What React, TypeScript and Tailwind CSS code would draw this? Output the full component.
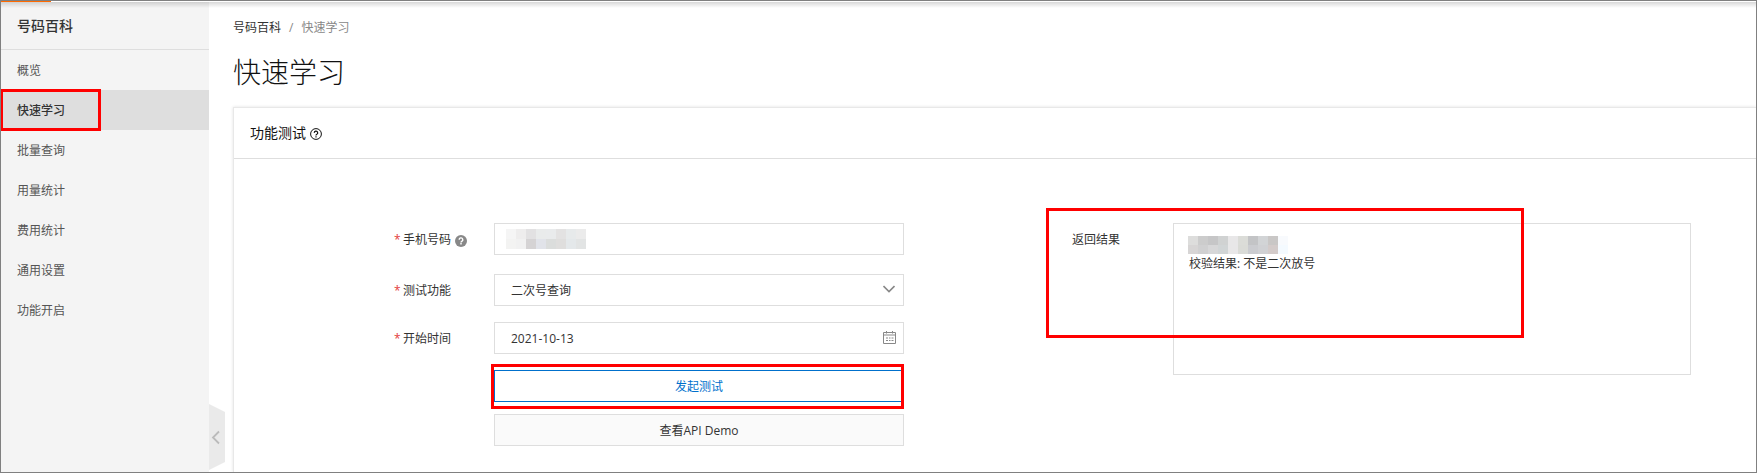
import { type ReactNode } from "react";

const menuItems = [
  "概览",
  "快速学习",
  "批量查询",
  "用量统计",
  "费用统计",
  "通用设置",
  "功能开启",
];

const phoneMosaic = [
  "bg-[#f5f5f5]", "bg-[#eeeded]", "bg-[#e2e1e2]", "bg-[#e9ebeb]",
  "bg-[#e9ebec]", "bg-[#e3e2e2]", "bg-[#e7eaeb]", "bg-[#ebebeb]",
  "bg-[#f3f3f2]", "bg-[#f1f1f1]", "bg-[#d5d3d4]", "bg-[#e1e3e9]",
  "bg-[#dbdddc]", "bg-[#dfdedd]", "bg-[#e4e8ea]", "bg-[#e2e4e4]",
];

const resultMosaic = [
  "bg-[#dddddc]", "bg-[#cccccc]", "bg-[#c6c6c7]", "bg-[#d0d2d2]", "bg-[#e8e7e8]",
  "bg-[#dbdcd8]", "bg-[#c3c4c6]", "bg-[#d2d4d6]", "bg-[#c9c7c6]", "bg-[#f8fafd]",
  "bg-[#d7d5d5]", "bg-[#d0d0d1]", "bg-[#d7d7d8]", "bg-[#d1d5d6]", "bg-[#e8e7e8]",
  "bg-[#dadbd7]", "bg-[#cbccd0]", "bg-[#d0d1d4]", "bg-[#d3cbca]", "bg-[#f4faff]",
];

export default function App() {
  return (
    <div className="relative flex min-h-screen overflow-hidden border border-[#808080] bg-white font-['Open_Sans','Noto_Sans_CJK_SC',sans-serif] text-xs text-[#333]">
      <TopBar />
      <Sidebar />

      <main className="flex min-w-0 flex-1 flex-col pl-6 pt-[17px]">
        <nav aria-label="breadcrumb" className="flex gap-2 leading-5">
          <a href="#">号码百科</a>
          <span className="text-[#888]">/</span>
          <span className="text-[#888]">快速学习</span>
        </nav>
        <h1 className="mt-3.5 text-[28px] font-light leading-10 text-[#111]">
          快速学习
        </h1>

        <section className="mt-[15px] flex-1 border-l border-t border-[#e8e8e8] shadow-[0_0_3px_rgba(0,0,0,0.12)]">
          <header className="flex h-[51px] items-center gap-1 border-b border-[#dedede] pl-4 text-sm text-[#111]">
            <h2>功能测试</h2>
            <HelpOutlineIcon />
          </header>
          <div className="grid grid-cols-[510fr_619fr] items-start gap-x-[168px] pb-6 pl-40 pr-[65px] pt-16">
            <TestForm />
            <ResultPanel />
          </div>
        </section>
      </main>
    </div>
  );
}

function TopBar() {
  return (
    <div className="absolute inset-x-0 top-0 z-10">
      <div className="h-px bg-white">
        <div className="h-px w-[50px] bg-[#ff6a00]" />
      </div>
      <div className="h-1.5 bg-linear-to-b from-black/15 to-transparent" />
    </div>
  );
}

function Sidebar() {
  return (
    <aside className="relative w-[208px] shrink-0 bg-[#f4f4f4]">
      <h2 className="h-[49px] border-b border-[#dedede] pl-4 text-sm font-medium leading-[50px]">
        号码百科
      </h2>
      <ul>
        {menuItems.map((item) => {
          const isActive = item === "快速学习";

          return (
            <li className="relative" key={item}>
              <a
                className={`block h-10 pl-4 leading-[42px] ${
                  isActive ? "bg-[#dedede] font-medium" : "text-[#555]"
                }`}
                href="#"
              >
                {item}
              </a>
              {isActive && (
                <Highlight className="-left-px -top-px h-[42px] w-[101px]" />
              )}
            </li>
          );
        })}
      </ul>
      <button
        aria-label="收起"
        className="absolute bottom-0.5 left-full h-[66px] w-4"
        type="button"
      >
        <svg aria-hidden="true" className="size-full" fill="none" viewBox="0 0 16 66">
          <path d="M0 0 16 8v50L0 66Z" fill="#eaeaea" />
          <path d="m10 27.5-6 6 6 6" stroke="#bbb" strokeWidth="1.8" />
        </svg>
      </button>
    </aside>
  );
}

function TestForm() {
  return (
    <form className="flex flex-col gap-4">
      <FormRow
        className="mb-[3px]"
        extra={<HelpFilledIcon />}
        htmlFor="phone"
        label="手机号码"
      >
        <input
          className="h-8 w-full border border-[#dedede] bg-white px-4 outline-none"
          id="phone"
          type="text"
        />
        <div className="absolute left-3 top-1.5 grid w-20 grid-cols-8">
          {phoneMosaic.map((color, index) => (
            <span className={`h-2.5 ${color}`} key={index} />
          ))}
        </div>
      </FormRow>

      <FormRow htmlFor="feature" label="测试功能">
        <select
          className="h-8 w-full appearance-none border border-[#dedede] bg-white px-4 pt-0.5 outline-none"
          id="feature"
        >
          <option>二次号查询</option>
        </select>
        <svg
          aria-hidden="true"
          className="pointer-events-none absolute right-[9px] top-[9px] h-3 w-3"
          fill="none"
          stroke="#888"
          strokeWidth="1.6"
          viewBox="0 0 12 12"
        >
          <path d="m.5 3 5.5 5.5L11.5 3" />
        </svg>
      </FormRow>

      <FormRow htmlFor="start" label="开始时间">
        <input
          className="h-8 w-full border border-[#dedede] bg-white px-4 outline-none"
          defaultValue="2021-10-13"
          id="start"
          type="text"
        />
        <CalendarIcon />
      </FormRow>

      <div className="flex flex-col gap-3 pl-[100px]">
        <div className="relative">
          <button
            className="block h-8 w-full border border-[#0070cc] bg-white pt-0.5 text-[#0070cc]"
            type="button"
          >
            发起测试
          </button>
          <Highlight className="-bottom-[7px] -left-[3px] -top-1.5 right-0" />
        </div>
        <button
          className="h-8 w-full border border-[#dedede] bg-[#fafafa] pt-0.5"
          type="button"
        >
          查看API Demo
        </button>
      </div>
    </form>
  );
}

function FormRow({
  children,
  className = "",
  extra,
  htmlFor,
  label,
}: {
  children: ReactNode;
  className?: string;
  extra?: ReactNode;
  htmlFor: string;
  label: string;
}) {
  return (
    <div className={`flex ${className}`}>
      <label
        className="flex h-8 w-[100px] shrink-0 items-center pt-0.5"
        htmlFor={htmlFor}
      >
        <span className="w-[9px] text-[#e3403a]">*</span>
        {label}
        {extra}
      </label>
      <div className="relative flex-1">{children}</div>
    </div>
  );
}

function ResultPanel() {
  return (
    <div className="relative flex">
      <label
        className="flex h-8 w-[101px] shrink-0 items-center pt-0.5"
        htmlFor="result"
      >
        返回结果
      </label>
      <div className="relative flex-1">
        <textarea
          className="block h-[152px] w-full resize-none border border-[#dedede] bg-white px-[15px] pt-8 leading-4 outline-none"
          defaultValue="校验结果: 不是二次放号"
          id="result"
        />
        <div className="absolute left-[15px] top-[13px] grid w-[100px] grid-cols-10">
          {resultMosaic.map((color, index) => (
            <span className={`h-[9px] ${color}`} key={index} />
          ))}
        </div>
      </div>
      <Highlight className="-left-[26px] -top-[15px] h-[130px] w-[478px]" />
    </div>
  );
}

function Highlight({ className }: { className: string }) {
  return (
    <div
      className={`pointer-events-none absolute z-10 border-3 border-[#f00] ${className}`}
    />
  );
}

function HelpOutlineIcon() {
  return (
    <svg
      aria-hidden="true"
      className="mt-0.5 size-3"
      fill="none"
      stroke="currentColor"
      viewBox="0 0 12 12"
    >
      <circle cx="6" cy="6" r="5.4" />
      <path d="M4.3 4.9a1.7 1.7 0 1 1 2.5 1.4c-.6.3-.8.6-.8 1.1" strokeWidth="1.2" />
      <path d="M6 8.2v1.2" strokeWidth="1.2" />
    </svg>
  );
}

function HelpFilledIcon() {
  return (
    <svg
      aria-hidden="true"
      className="ml-1 mt-0.5 size-3"
      fill="none"
      viewBox="0 0 12 12"
    >
      <circle cx="6" cy="6" fill="#888" r="6" />
      <path
        d="M4.2 4.8a1.8 1.8 0 1 1 2.6 1.5c-.6.3-.8.6-.8 1.1"
        stroke="#fff"
        strokeWidth="1.4"
      />
      <path d="M6 8.1v1.4" stroke="#fff" strokeWidth="1.4" />
    </svg>
  );
}

function CalendarIcon() {
  return (
    <svg
      aria-hidden="true"
      className="pointer-events-none absolute right-2 top-[9px] h-[13px] w-[13px]"
      fill="none"
      stroke="#888"
      viewBox="0 0 13 13"
    >
      <path d="M.5 1.5h12v11H.5zM.5 4h12M3.5 0v2.5M9.5 0v2.5" />
      <path d="M3 7h2M6 7h1.5M8.5 7h2M3 9.5h2M6 9.5h1.5M8.5 9.5h2" />
    </svg>
  );
}
